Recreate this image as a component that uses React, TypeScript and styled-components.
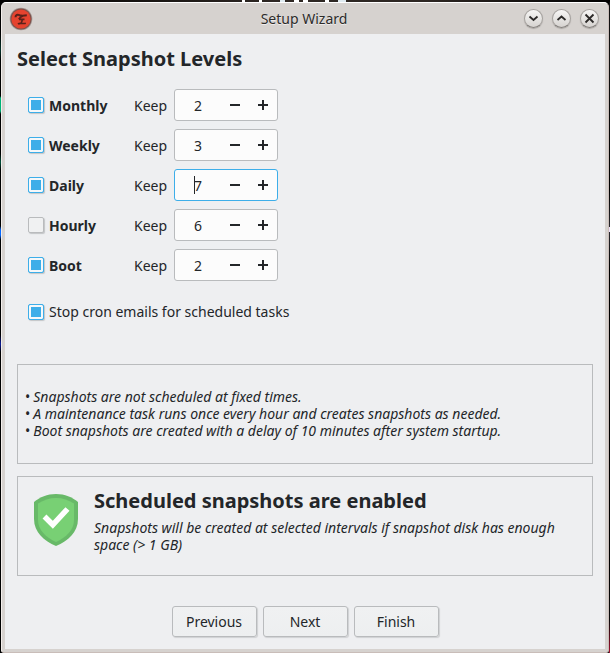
import React, { useState } from "react";
import styled, { createGlobalStyle } from "styled-components";

const GlobalStyle = createGlobalStyle`
  * { box-sizing: border-box; }
  body {
    margin: 0;
    background: #000;
    color: #232629;
    font: 14px/17px "Noto Sans", "Open Sans", sans-serif;
  }
  button, input { font: inherit; color: inherit; }
`;

const Desktop = styled.div`
  min-height: 100vh;
  padding: 2px 1px 1px 1px;
  display: flex;
  background:
    linear-gradient(#fff, #fff) 242px 0 / 3px 2px no-repeat,
    linear-gradient(#fff, #fff) 259px 0 / 3px 2px no-repeat,
    linear-gradient(#dfeaf0, #dfeaf0) 280px 0 / 5px 2px no-repeat,
    linear-gradient(#fff, #fff) 294px 0 / 5px 2px no-repeat,
    linear-gradient(#fff, #fff) 303px 0 / 5px 2px no-repeat,
    linear-gradient(#fff, #fff) 325px 0 / 4px 2px no-repeat,
    linear-gradient(#dfeaf0, #dfeaf0) 338px 0 / 8px 2px no-repeat,
    linear-gradient(90deg, #000 0%, #2e2723 45%, #2e2723 70%, #000 100%) 0 0 / 100% 2px no-repeat,
    linear-gradient(#eadcf5, #eadcf5) 100% 227px / 1px 5px no-repeat,
    linear-gradient(#000 34px, #04332a 50px, #000 60px, #000 96px, #00b377 98px, #00b377 111px,
      #000 114px, #000 154px, #00503a 162px, #000 170px, #000 226px, #0668ff 230px,
      #0668ff 235px, #000 240px, #000 335px, #0b1a9a 344px, #000 352px) 0 0 / 1px 100% no-repeat,
    linear-gradient(#111 60px, #000 190px, #2b2b30 230px, #000 270px, #000 560px, #0a0a0a 620px,
      #a80e2e 100%) 100% 0 / 1px 100% no-repeat,
    #000;
`;

const Window = styled.main`
  flex: 1;
  display: flex;
  flex-direction: column;
  padding: 0 3px 3px;
  border: 1px solid #c9bdb9;
  border-top-color: #fff;
  border-left-color: #f3eeeb;
  border-radius: 5px 5px 3px 3px;
  background: #d6d2cf;
`;

const TitleBar = styled.header`
  height: 31px;
  padding: 0 6px 0 4px;
  display: grid;
  grid-template-columns: 1fr auto 1fr;
  align-items: center;
`;

const WindowTitle = styled.div`
  color: #2d2b2a;
  text-shadow: 0 1px #efedec;
`;

const WindowControls = styled.div`
  display: flex;
  justify-content: flex-end;
  gap: 9px;
`;

const ControlButton = styled.button`
  width: 19px;
  height: 19px;
  padding: 0;
  border: 1px solid #a5a19e;
  border-bottom-color: #85817e;
  border-radius: 50%;
  background: linear-gradient(#f7f6f5, #d6d3d0);
  box-shadow: 0 1px 1px #aaa6a3;
  display: grid;
  place-items: center;
`;

const Body = styled.div`
  flex: 1;
  padding: 12px;
  background: #eeeff1;
`;

const Heading = styled.h1`
  margin: 0;
  font-size: 20px;
  line-height: 26px;
`;

const Levels = styled.div`
  margin: 17px 0 0 11px;
  display: flex;
  flex-direction: column;
  gap: 8px;
`;

const LevelRow = styled.div`
  display: grid;
  grid-template-columns: 106px 40px 104px;
  align-items: center;
`;

const CheckLabel = styled.label<{ $bold?: boolean }>`
  display: flex;
  align-items: center;
  gap: 5px;
  font-weight: ${(p) => (p.$bold ? 700 : 400)};
`;

const CheckBox = styled.input`
  appearance: none;
  width: 16px;
  height: 16px;
  margin: 0;
  border: 1px solid #b9bbbd;
  border-radius: 2px;
  background: #f0f1f2;
  box-shadow: 1px 1px 1px #c3c5c7;
  &:checked {
    border-color: #3daee9;
    background: #3daee9;
    box-shadow: inset 0 0 0 2px #f5f8fa, 1px 1px 1px #c3c5c7;
  }
`;

const SpinBox = styled.div<{ $active: boolean }>`
  height: 32px;
  display: grid;
  grid-template-columns: 46px 28px 28px;
  position: relative;
  border: 1px solid ${(p) => (p.$active ? "#3daee9" : "#b9bbbd")};
  border-radius: 3px;
  background: #fcfcfc;
`;

const SpinInput = styled.input`
  width: 100%;
  padding: 0;
  border: 0;
  outline: 0;
  background: none;
  text-align: center;
`;

const Caret = styled.span`
  position: absolute;
  left: 19px;
  top: 6px;
  width: 1px;
  height: 18px;
  background: #232629;
`;

const StepButton = styled.button`
  padding: 0;
  border: 0;
  background: none;
  display: grid;
  place-items: center;
`;

const CronOption = styled.div`
  margin: 22px 0 0 11px;
`;

const Panel = styled.section`
  min-height: 100px;
  border: 1px solid #b9bbbd;
`;

const NotesPanel = styled(Panel)`
  margin-top: 44px;
  padding: 23px 7px;
  font-style: italic;
`;

const NoteList = styled.ul`
  margin: 0;
  padding: 0;
  list-style: none;
  li::before { content: "•"; margin-right: 3px; font-style: normal; }
`;

const StatusPanel = styled(Panel)`
  margin-top: 12px;
  padding: 10px 16px;
  display: grid;
  grid-template-columns: 44px 1fr;
  gap: 16px;
`;

const Shield = styled.svg`
  width: 44px;
  height: 52px;
  margin-top: 7px;
`;

const StatusTitle = styled.h2`
  margin: 0 0 5px;
  font-size: 20px;
  line-height: 27px;
`;

const StatusText = styled.p`
  margin: 0;
  font-style: italic;
`;

const Actions = styled.footer`
  margin-top: 30px;
  display: flex;
  justify-content: center;
  gap: 6px;
`;

const ActionButton = styled.button`
  width: 85px;
  height: 31px;
  padding: 0;
  border: 1px solid #b9bbbd;
  border-radius: 3px;
  background: linear-gradient(#f0f1f2, #edeff0);
  box-shadow: 1px 1px 1px #cfd1d3;
`;

type Level = { name: string; on: boolean; keep: number };

const initialLevels: Level[] = [
  { name: "Monthly", on: true, keep: 2 },
  { name: "Weekly", on: true, keep: 3 },
  { name: "Daily", on: true, keep: 7 },
  { name: "Hourly", on: false, keep: 6 },
  { name: "Boot", on: true, keep: 2 },
];

const notes = [
  "Snapshots are not scheduled at fixed times.",
  "A maintenance task runs once every hour and creates snapshots as needed.",
  "Boot snapshots are created with a delay of 10 minutes after system startup.",
];

const controls = [
  { label: "Minimize", d: "M2.500 4.500L6.500 8L10.500 4.500" },
  { label: "Maximize", d: "M2.500 8L6.500 4.500L10.500 8" },
  { label: "Close", d: "M2.500 2.500L10.500 10.500M10.500 2.500L2.500 10.500" },
];

function AppLogo() {
  return (
    <svg width="24" height="24" viewBox="0 0 24 24" aria-hidden="true">
      <circle cx="12" cy="12" r="11.300" fill="#a39591" />
      <circle cx="12" cy="12" r="10.600" fill="#7d524c" />
      <circle cx="12" cy="12" r="9.600" fill="#e5432f" />
      <path
        d="M6.500 10.300C6.500 8 8.500 7.200 10.500 8.200C13 9.200 15 8.500 17.800 8.300"
        fill="none"
        stroke="#5a211a"
        strokeWidth="2"
      />
      <path
        d="M13.800 9C11.500 10 10.500 11 9.800 12.200M10 12.300H15.500M13 12.300C13.400 13.800 13 15 12.200 16M9 17C11 15.300 13.500 17.300 16.800 16.200"
        fill="none"
        stroke="#5a211a"
        strokeWidth="1.700"
      />
    </svg>
  );
}

export default function App() {
  const [levels, setLevels] = useState(initialLevels);
  const [active, setActive] = useState("Daily");
  const [stopEmails, setStopEmails] = useState(true);

  const update = (name: string, change: Partial<Level>) =>
    setLevels((list) => list.map((l) => (l.name === name ? { ...l, ...change } : l)));

  return (
    <>
      <GlobalStyle />
      <Desktop>
        <Window>
          <TitleBar>
            <AppLogo />
            <WindowTitle>Setup Wizard</WindowTitle>
            <WindowControls>
              {controls.map((c) => (
                <ControlButton key={c.label} type="button" aria-label={c.label}>
                  <svg width="13" height="13" viewBox="0 0 13 13">
                    <path d={c.d} fill="none" stroke="#2b2928" strokeWidth="1.800" />
                  </svg>
                </ControlButton>
              ))}
            </WindowControls>
          </TitleBar>
          <Body>
            <Heading>Select Snapshot Levels</Heading>
            <Levels>
              {levels.map((l) => (
                <LevelRow key={l.name}>
                  <CheckLabel $bold>
                    <CheckBox
                      type="checkbox"
                      checked={l.on}
                      onChange={(e) => update(l.name, { on: e.target.checked })}
                    />
                    {l.name}
                  </CheckLabel>
                  <label htmlFor={`keep-${l.name}`}>Keep</label>
                  <SpinBox $active={active === l.name}>
                    <SpinInput
                      id={`keep-${l.name}`}
                      inputMode="numeric"
                      value={l.keep}
                      onFocus={() => setActive(l.name)}
                      onChange={(e) => update(l.name, { keep: Number(e.target.value) || 0 })}
                    />
                    {active === l.name && <Caret />}
                    <StepButton
                      type="button"
                      aria-label={`Decrease ${l.name}`}
                      onClick={() => update(l.name, { keep: Math.max(0, l.keep - 1) })}
                    >
                      <svg width="10" height="10" viewBox="0 0 10 10">
                        <path d="M0 5H10" stroke="#232629" strokeWidth="2" />
                      </svg>
                    </StepButton>
                    <StepButton
                      type="button"
                      aria-label={`Increase ${l.name}`}
                      onClick={() => update(l.name, { keep: l.keep + 1 })}
                    >
                      <svg width="10" height="10" viewBox="0 0 10 10">
                        <path d="M0 5H10M5 0V10" stroke="#232629" strokeWidth="2" />
                      </svg>
                    </StepButton>
                  </SpinBox>
                </LevelRow>
              ))}
            </Levels>
            <CronOption>
              <CheckLabel>
                <CheckBox
                  type="checkbox"
                  checked={stopEmails}
                  onChange={(e) => setStopEmails(e.target.checked)}
                />
                Stop cron emails for scheduled tasks
              </CheckLabel>
            </CronOption>
            <NotesPanel>
              <NoteList>
                {notes.map((n) => (
                  <li key={n}>{n}</li>
                ))}
              </NoteList>
            </NotesPanel>
            <StatusPanel>
              <Shield viewBox="0 0 44 52" aria-hidden="true">
                <path
                  d="M0 8C6 3 13 0 22 0S38 3 44 8V25C44 38 34 47 22 52C10 47 0 38 0 25Z"
                  fill="#68b968"
                />
                <path
                  d="M4 9.500C10 6 15 4 22 4S34 6 40 9.500V26C40 36 32 43.500 22 48C12 43.500 4 36 4 26Z"
                  fill="#78d074"
                />
                <path d="M10.500 22.500L18.800 30.800L33.500 15" fill="none" stroke="#fff" strokeWidth="5.500" />
              </Shield>
              <div>
                <StatusTitle>Scheduled snapshots are enabled</StatusTitle>
                <StatusText>
                  Snapshots will be created at selected intervals if snapshot disk has enough space
                  (&gt; 1 GB)
                </StatusText>
              </div>
            </StatusPanel>
            <Actions>
              {["Previous", "Next", "Finish"].map((t) => (
                <ActionButton key={t} type="button">
                  {t}
                </ActionButton>
              ))}
            </Actions>
          </Body>
        </Window>
      </Desktop>
    </>
  );
}
